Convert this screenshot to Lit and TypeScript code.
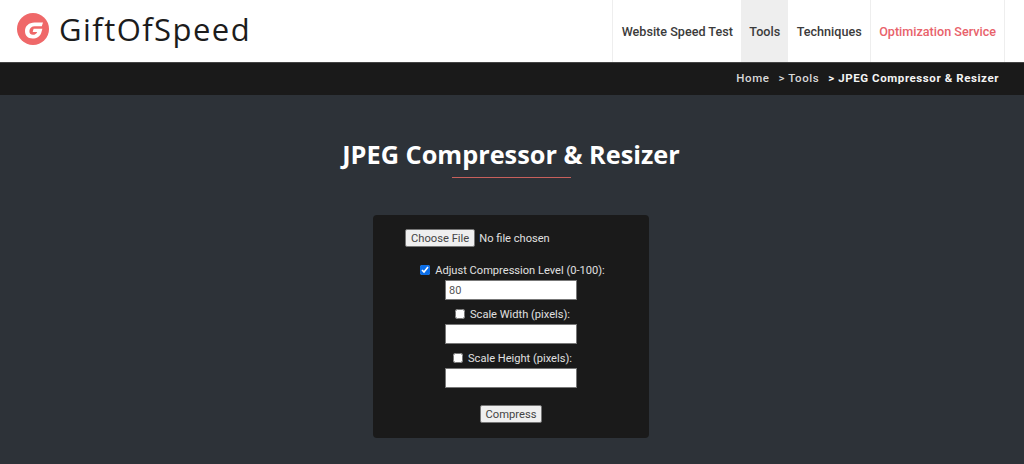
import { css, html, LitElement } from "lit";
import { customElement } from "lit/decorators.js";

@customElement("app-root")
export class AppRoot extends LitElement {
    static override styles = css`
        :host {
            display: block;
            height: 464px;
            overflow: hidden;
            background: #2d3238;
            font-family: Roboto, "Liberation Sans", sans-serif;
        }

        .top {
            display: flex;
            justify-content: space-between;
            height: 62px;
            padding: 0 19px 0 17px;
            background: #fff;
        }

        .brand {
            display: flex;
            align-items: center;
            gap: 10px;
            padding-bottom: 5px;
        }

        .brand svg {
            display: block;
        }

        .brand-name {
            font-family: "Open Sans", sans-serif;
            font-size: 31px;
            letter-spacing: 1.45px;
            color: #1c1c1c;
        }

        nav {
            display: flex;
            border-right: 1px solid #eee;
        }

        nav a {
            display: flex;
            align-items: center;
            padding: 0 8px 0 8.5px;
            font-size: 12.6px;
            font-weight: 500;
            color: #3b3b3b;
        }

        nav a.first {
            border-left: 1px solid #eee;
        }

        nav a.active {
            background: #eee;
        }

        nav a.accent {
            border-left: 1px solid #eee;
            color: #e8626b;
        }

        .crumbs {
            display: flex;
            justify-content: flex-end;
            align-items: center;
            gap: 9px;
            box-sizing: border-box;
            height: 33px;
            padding: 0 25px 2px 0;
            background: #1a1a1a;
            border-top: 1px solid #444;
            font-size: 11.5px;
            font-weight: 500;
            letter-spacing: 0.58px;
            color: #d8d8d8;
        }

        .crumbs b {
            font-weight: 700;
            color: #f4f4f4;
        }

        main {
            display: flex;
            flex-direction: column;
            align-items: center;
            padding-right: 2px;
        }

        h1 {
            margin: 42px 0 0;
            font-family: "Open Sans", sans-serif;
            font-size: 25.3px;
            line-height: 34px;
            font-weight: 700;
            color: #fff;
        }

        .rule {
            width: 119px;
            height: 1px;
            margin: 6px 0 37px;
            background: #c8605c;
        }

        form {
            display: flex;
            flex-direction: column;
            align-items: center;
            box-sizing: border-box;
            width: 276px;
            height: 223px;
            padding-top: 14px;
            border-radius: 4px;
            background: #1a1a1a;
            font-size: 11.1px;
            color: #e0e0e0;
        }

        .file {
            display: flex;
            align-items: center;
            gap: 4px;
            align-self: flex-start;
            margin: 0 0 16px 32px;
            height: 18px;
        }

        button {
            box-sizing: border-box;
            height: 18px;
            padding: 0 5px;
            border: 1px solid #767676;
            border-radius: 2px;
            background: #efefef;
            font: 11.2px Roboto, "Liberation Sans", sans-serif;
            color: #444;
        }

        label {
            display: flex;
            align-items: center;
            gap: 5px;
            height: 14px;
            margin: 0 0 3px 3px;
        }

        label input {
            width: 10px;
            height: 10px;
            margin: 0;
            accent-color: #0b6ee8;
        }

        .num {
            box-sizing: border-box;
            width: 132px;
            height: 20px;
            padding: 0 3px;
            margin-bottom: 7px;
            border: 1px solid #777;
            border-radius: 0;
            background: #fff;
            font: 11px Roboto, "Liberation Sans", sans-serif;
            color: #555;
        }

        .compress {
            margin-top: 10px;
            padding: 0 5px;
        }
    `;

    override render() {
        return html`
            <header class="top">
                <div class="brand">
                    <svg width="32" height="32" viewBox="0 0 32 32">
                        <circle cx="16" cy="16" r="16" fill="#ef6869"></circle>
                        <path
                            d="M26 9.5 H17.5 C12 9.5 8 13 8 18 C8 22.8 11 25.5 15.5 25.5 C20 25.5 23 23.5 24.2 20 L25.4 15.8 H16.6 L15.7 19 H20.2 C19.5 20.9 17.9 21.8 16 21.8 C13.6 21.8 12.2 20.4 12.4 18 C12.6 15 14.8 13.3 17.8 13.3 H24.8 Z"
                            fill="#fff"
                        ></path>
                    </svg>
                    <span class="brand-name">GiftOfSpeed</span>
                </div>
                <nav>
                    <a class="first">Website Speed Test</a>
                    <a class="active">Tools</a>
                    <a>Techniques</a>
                    <a class="accent">Optimization Service</a>
                </nav>
            </header>
            <div class="crumbs">
                <span>Home</span>
                <span>&gt; Tools</span>
                <b>&gt; JPEG Compressor &amp; Resizer</b>
            </div>
            <main>
                <h1>JPEG Compressor &amp; Resizer</h1>
                <div class="rule"></div>
                <form>
                    <div class="file">
                        <button type="button">Choose File</button>
                        <span>No file chosen</span>
                    </div>
                    <label><input type="checkbox" checked />Adjust Compression Level (0-100):</label>
                    <input class="num" type="text" value="80" />
                    <label><input type="checkbox" />Scale Width (pixels):</label>
                    <input class="num" type="text" />
                    <label><input type="checkbox" />Scale Height (pixels):</label>
                    <input class="num" type="text" />
                    <button class="compress" type="button">Compress</button>
                </form>
            </main>
        `;
    }
}
